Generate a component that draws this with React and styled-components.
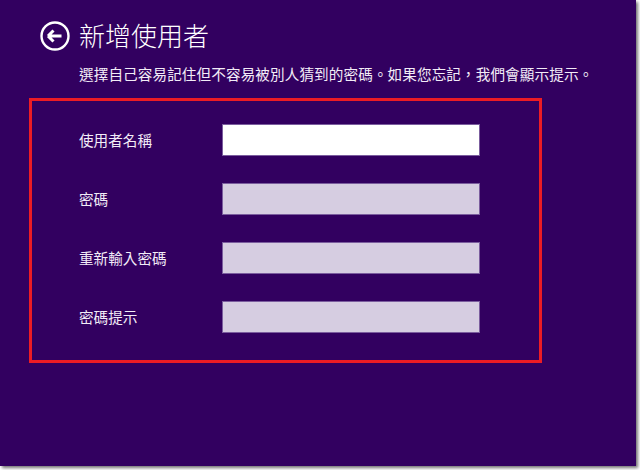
import React from "react";
import styled, { createGlobalStyle } from "styled-components";

const GlobalStyle = createGlobalStyle`
  html, body {
    margin: 0;
    padding: 0;
    background: #ffffff;
  }
  body {
    font-family: "Noto Sans CJK TC", "Noto Sans", sans-serif;
  }
`;

const fields = [
  { label: "使用者名稱", active: true },
  { label: "密碼" },
  { label: "重新輸入密碼" },
  { label: "密碼提示" },
];

const BackIcon = () => (
  <svg width="30" height="30" viewBox="0 0 30 30">
    <circle cx="15" cy="15" r="13.5" fill="none" stroke="#fff" strokeWidth="2.4" />
    <path
      d="M8 15 L21.5 15 M8 15 L13.5 9.5 M8 15 L13.5 20.5"
      fill="none"
      stroke="#fff"
      strokeWidth="3"
      strokeLinecap="butt"
      strokeLinejoin="miter"
    />
  </svg>
);

const App = () => {
  return (
    <>
      <GlobalStyle />
      <Frame>
        <Screen lang="zh-Hant-TW">
          <Header>
            <BackButton aria-label="返回">
              <BackIcon />
            </BackButton>
            <Title>新增使用者</Title>
          </Header>
          <Subtitle>
            選擇自己容易記住但不容易被別人猜到的密碼。如果您忘記，我們會顯示提示。
          </Subtitle>
          <Highlight>
            {fields.map((f) => (
              <React.Fragment key={f.label}>
                <Label>{f.label}</Label>
                <Field $active={f.active} type={f.label.includes("密碼") ? "password" : "text"} />
              </React.Fragment>
            ))}
          </Highlight>
        </Screen>
      </Frame>
    </>
  );
};

export default App;

const Frame = styled.div`
  width: 640px;
  height: 470px;
  background: #ffffff;
`;

const Screen = styled.div`
  width: 636px;
  height: 466px;
  background: #320060;
  box-shadow: 2px 2px 3px rgba(0, 0, 0, 0.55);
  display: flex;
  flex-direction: column;
  box-sizing: border-box;
  padding-top: 16px;
  color: #f2ecf7;
`;

const Header = styled.div`
  display: flex;
  align-items: center;
  height: 40px;
  padding-left: 40px;
  gap: 9px;
`;

const BackButton = styled.div`
  width: 30px;
  height: 30px;
  display: flex;
  align-items: center;
  justify-content: center;
`;

const Title = styled.h1`
  margin: 0;
  font-size: 26px;
  font-weight: 300;
  line-height: 40px;
  color: #ffffff;
  margin-top: -3px;
`;

const Subtitle = styled.p`
  margin: 8px 0 0 79px;
  font-size: 14.6px;
  line-height: 20px;
  letter-spacing: 0.1px;
  white-space: nowrap;
`;

const Highlight = styled.div`
  margin: 14px 0 0 29px;
  width: 513px;
  height: 265px;
  box-sizing: border-box;
  border: 3px solid #ed1c24;
  display: grid;
  grid-template-columns: 143px 258px;
  grid-auto-rows: 32px;
  row-gap: 27px;
  align-items: center;
  padding: 23px 0 0 47px;
`;

const Label = styled.div`
  font-size: 14.6px;
  line-height: 32px;
  white-space: nowrap;
`;

const Field = styled.input`
  width: 258px;
  height: 32px;
  box-sizing: border-box;
  border: 1px solid #7b5d9e;
  background: ${(p) => (p.$active ? "#ffffff" : "#d6cde1")};
  margin: 0;
  padding: 0 6px;
  outline: none;
`;
